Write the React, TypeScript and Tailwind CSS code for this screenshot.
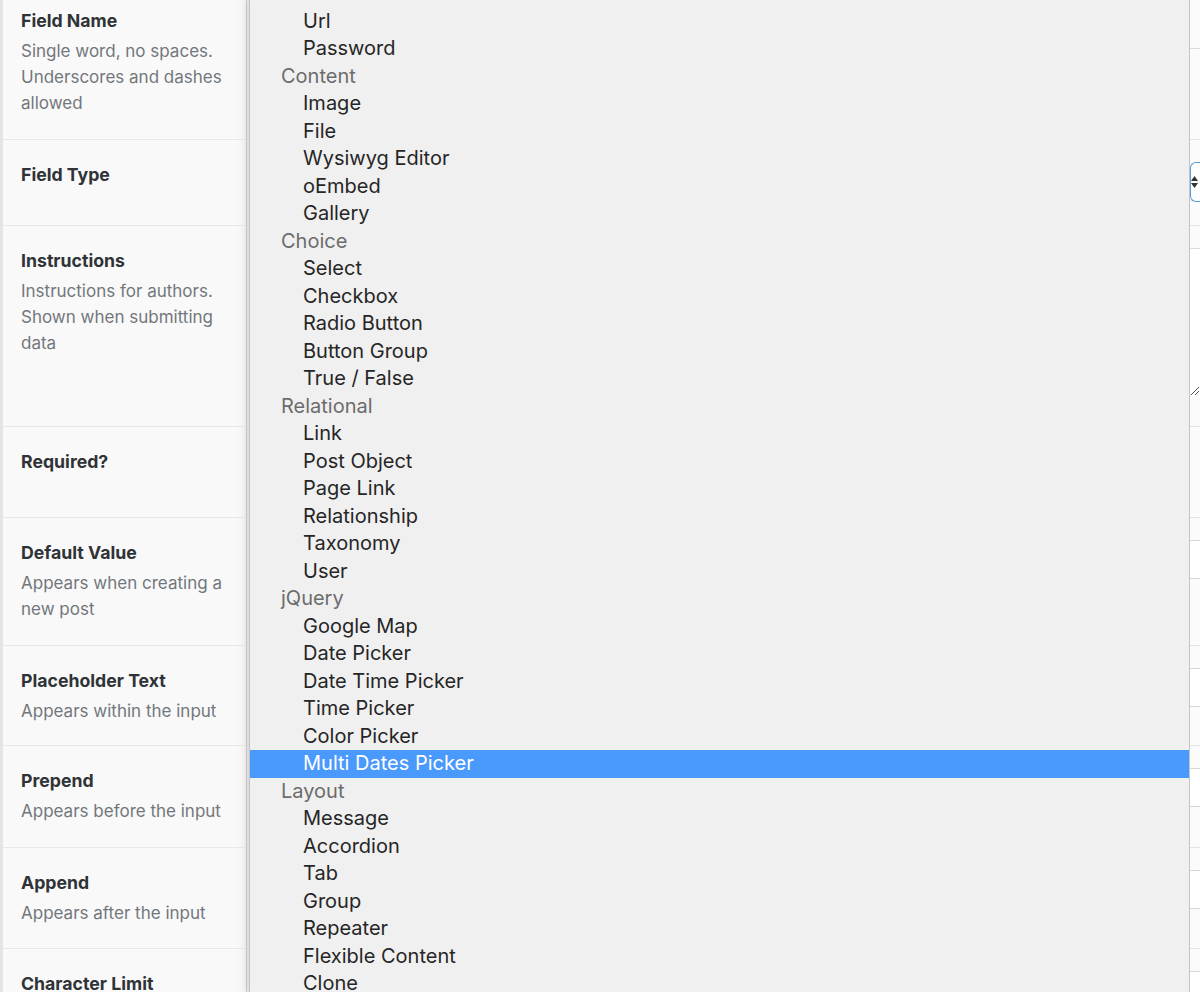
import React from "react";

type Row = { label: string; desc?: string[]; h: string };

const rows: Row[] = [
  { label: "Field Name", desc: ["Single word, no spaces.", "Underscores and dashes", "allowed"], h: "h-[154px]" },
  { label: "Field Type", h: "h-[86px]" },
  { label: "Instructions", desc: ["Instructions for authors.", "Shown when submitting", "data"], h: "h-[201px]" },
  { label: "Required?", h: "h-[91px]" },
  { label: "Default Value", desc: ["Appears when creating a", "new post"], h: "h-[128px]" },
  { label: "Placeholder Text", desc: ["Appears within the input"], h: "h-[100px]" },
  { label: "Prepend", desc: ["Appears before the input"], h: "h-[102px]" },
  { label: "Append", desc: ["Appears after the input"], h: "h-[101px]" },
  { label: "Character Limit", h: "h-[100px]" },
];

type Opt = { text: string; group?: boolean; selected?: boolean };

const options: Opt[] = [
  { text: "Email" },
  { text: "Url" },
  { text: "Password" },
  { text: "Content", group: true },
  { text: "Image" },
  { text: "File" },
  { text: "Wysiwyg Editor" },
  { text: "oEmbed" },
  { text: "Gallery" },
  { text: "Choice", group: true },
  { text: "Select" },
  { text: "Checkbox" },
  { text: "Radio Button" },
  { text: "Button Group" },
  { text: "True / False" },
  { text: "Relational", group: true },
  { text: "Link" },
  { text: "Post Object" },
  { text: "Page Link" },
  { text: "Relationship" },
  { text: "Taxonomy" },
  { text: "User" },
  { text: "jQuery", group: true },
  { text: "Google Map" },
  { text: "Date Picker" },
  { text: "Date Time Picker" },
  { text: "Time Picker" },
  { text: "Color Picker" },
  { text: "Multi Dates Picker", selected: true },
  { text: "Layout", group: true },
  { text: "Message" },
  { text: "Accordion" },
  { text: "Tab" },
  { text: "Group" },
  { text: "Repeater" },
  { text: "Flexible Content" },
  { text: "Clone" },
];

function LabelColumn() {
  return (
    <div className="w-[247px] shrink-0 border-l-[3px] border-l-[#e4e4e4] border-r border-r-[#cdcdcd] bg-[#f9f9f9] shadow-[inset_-10px_0_10px_-8px_rgba(0,0,0,0.06)]">
      <div className="-mt-[14px]">
        {rows.map((r) => (
          <div key={r.label} className={`${r.h} border-b border-[#e8e8e8] pl-[18px] pt-[23px]`}>
            <p className="text-[17.7px] font-bold leading-[24px] text-[#2f3337]">{r.label}</p>
            {r.desc ? (
              <div className="mt-[5px] text-[17px] leading-[26px] text-[#72777c]">
                {r.desc.map((d) => (
                  <p key={d}>{d}</p>
                ))}
              </div>
            ) : null}
          </div>
        ))}
      </div>
    </div>
  );
}

function Menu() {
  return (
    <div className="flex-1 border-l border-r border-[#c4c4c4] bg-[#f0f0f0] shadow-[0_0_8px_rgba(0,0,0,0.12)]">
      <ul className="-mt-[20px]">
        {options.map((o) => (
          <li
            key={o.text}
            className={`h-[27.5px] whitespace-nowrap text-[20px] leading-[27.5px] ${
              o.group
                ? "pl-[31px] text-[#6c6c6c]"
                : o.selected
                  ? "bg-[#4a99fd] pl-[53px] text-white"
                  : "pl-[53px] text-[#262626]"
            }`}
          >
            {o.text}
          </li>
        ))}
      </ul>
    </div>
  );
}

function PageStrip() {
  return (
    <div className="w-[10px] shrink-0 bg-[#fbfbfb]">
      <div className="-mt-[14px]">
        <div className="h-[154px] border-b border-[#e4e4e4]">
          <div className="h-[63px] border-b border-[#dcdcdc]" />
        </div>
        <div className="h-[86px] border-b border-[#e4e4e4] pt-[22px]">
          <div className="flex h-[40px] items-center rounded-l-[6px] border border-r-0 border-[#5b9dd9] bg-white">
            <svg width="9" height="14" viewBox="0 0 9 14" className="-ml-[1px]">
              <path d="M4.5 1 L8 6 L1 6 Z" fill="#333" />
              <path d="M4.5 13 L8 8 L1 8 Z" fill="#333" />
            </svg>
          </div>
        </div>
        <div className="h-[201px] border-b border-[#e4e4e4] pt-[22px]">
          <div className="relative h-[150px] border-t border-[#dcdcdc] bg-white">
            <svg width="10" height="10" viewBox="0 0 10 10" className="absolute bottom-[2px] left-0">
              <path d="M1 9 L9 1 M5 9 L9 5" stroke="#555" strokeWidth="1" />
            </svg>
          </div>
        </div>
        <div className="h-[91px] border-b border-[#e4e4e4]" />
        {[128, 100, 102, 101, 100].map((h) => (
          <div key={h + "r"} className="border-b border-[#e4e4e4] pt-[22px]" style={{ height: h }}>
            <div className="h-[39px] border-y border-[#d6d6d6] bg-white" />
          </div>
        ))}
      </div>
    </div>
  );
}

export default function App() {
  return (
    <div
      className="flex h-[992px] w-[1200px] overflow-hidden bg-white"
      style={{ fontFamily: "Inter, 'Noto Sans', sans-serif" }}
    >
      <LabelColumn />
      <div className="w-[2px] shrink-0 bg-[#e9e9e9]" />
      <Menu />
      <PageStrip />
    </div>
  );
}
